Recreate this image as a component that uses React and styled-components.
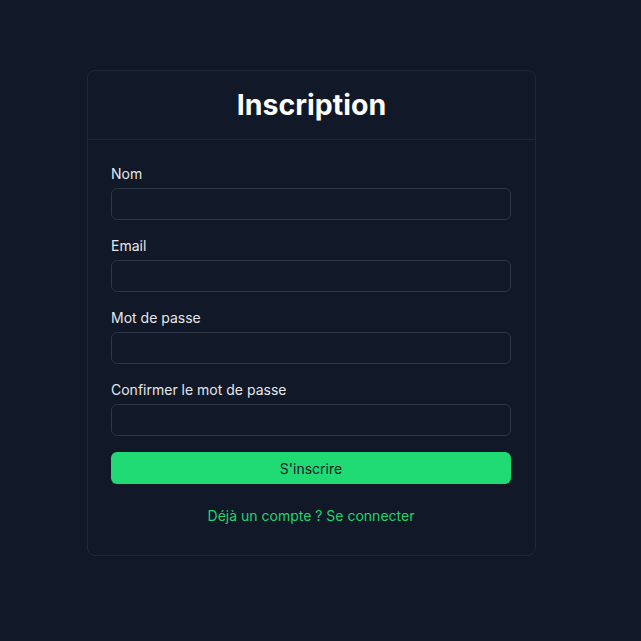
import React from "react";
import styled, { createGlobalStyle } from "styled-components";

const Global = createGlobalStyle`
  * { box-sizing: border-box; }
  html, body { margin: 0; padding: 0; background: #111827; }
  body { font-family: Inter, "Noto Sans", sans-serif; -webkit-font-smoothing: antialiased; }
`;

const Page = styled.div`
  min-height: 641px;
  padding: 70px 0 0 87px;
  background: #111827;
`;

const Card = styled.div`
  width: 449px;
  border: 1px solid #1f2937;
  border-radius: 8px;
  background: #111827;
`;

const Header = styled.div`
  padding: 16px 0;
  border-bottom: 1px solid #1f2937;
  text-align: center;
`;

const Title = styled.h1`
  margin: 0;
  font-size: 28.5px;
  line-height: 36px;
  font-weight: 700;
  color: #ffffff;
`;

const Form = styled.form`
  display: flex;
  flex-direction: column;
  gap: 16px;
  padding: 24px 24px 29px 23px;
`;

const Field = styled.div`
  display: flex;
  flex-direction: column;
  gap: 4px;
`;

const Label = styled.label`
  font-size: 14px;
  line-height: 20px;
  font-weight: 400;
  color: #e5e7eb;
`;

const Input = styled.input`
  height: 32px;
  width: 100%;
  border: 1px solid #2d3748;
  border-radius: 6px;
  background: #111827;
  color: #e5e7eb;
  padding: 0 12px;
  font-family: inherit;
  font-size: 14px;
  outline: none;
`;

const Button = styled.button`
  height: 32px;
  width: 100%;
  border: none;
  border-radius: 6px;
  background: #20da74;
  color: #111827;
  font-family: inherit;
  font-size: 14px;
  font-weight: 400;
  cursor: pointer;
`;

const LinkText = styled.a`
  margin-top: 6px;
  display: block;
  text-align: center;
  font-size: 14px;
  line-height: 20px;
  color: #20d36f;
  text-decoration: none;
`;

const fields = ["Nom", "Email", "Mot de passe", "Confirmer le mot de passe"];

export default function App() {
  return (
    <>
      <Global />
      <Page>
        <Card>
          <Header>
            <Title>Inscription</Title>
          </Header>
          <Form onSubmit={(e) => e.preventDefault()}>
            {fields.map((f, i) => (
              <Field key={f}>
                <Label htmlFor={"f" + i}>{f}</Label>
                <Input id={"f" + i} type={i >= 2 ? "password" : i === 1 ? "email" : "text"} />
              </Field>
            ))}
            <Button type="submit">S'inscrire</Button>
            <LinkText href="#">Déjà un compte ? Se connecter</LinkText>
          </Form>
        </Card>
      </Page>
    </>
  );
}
